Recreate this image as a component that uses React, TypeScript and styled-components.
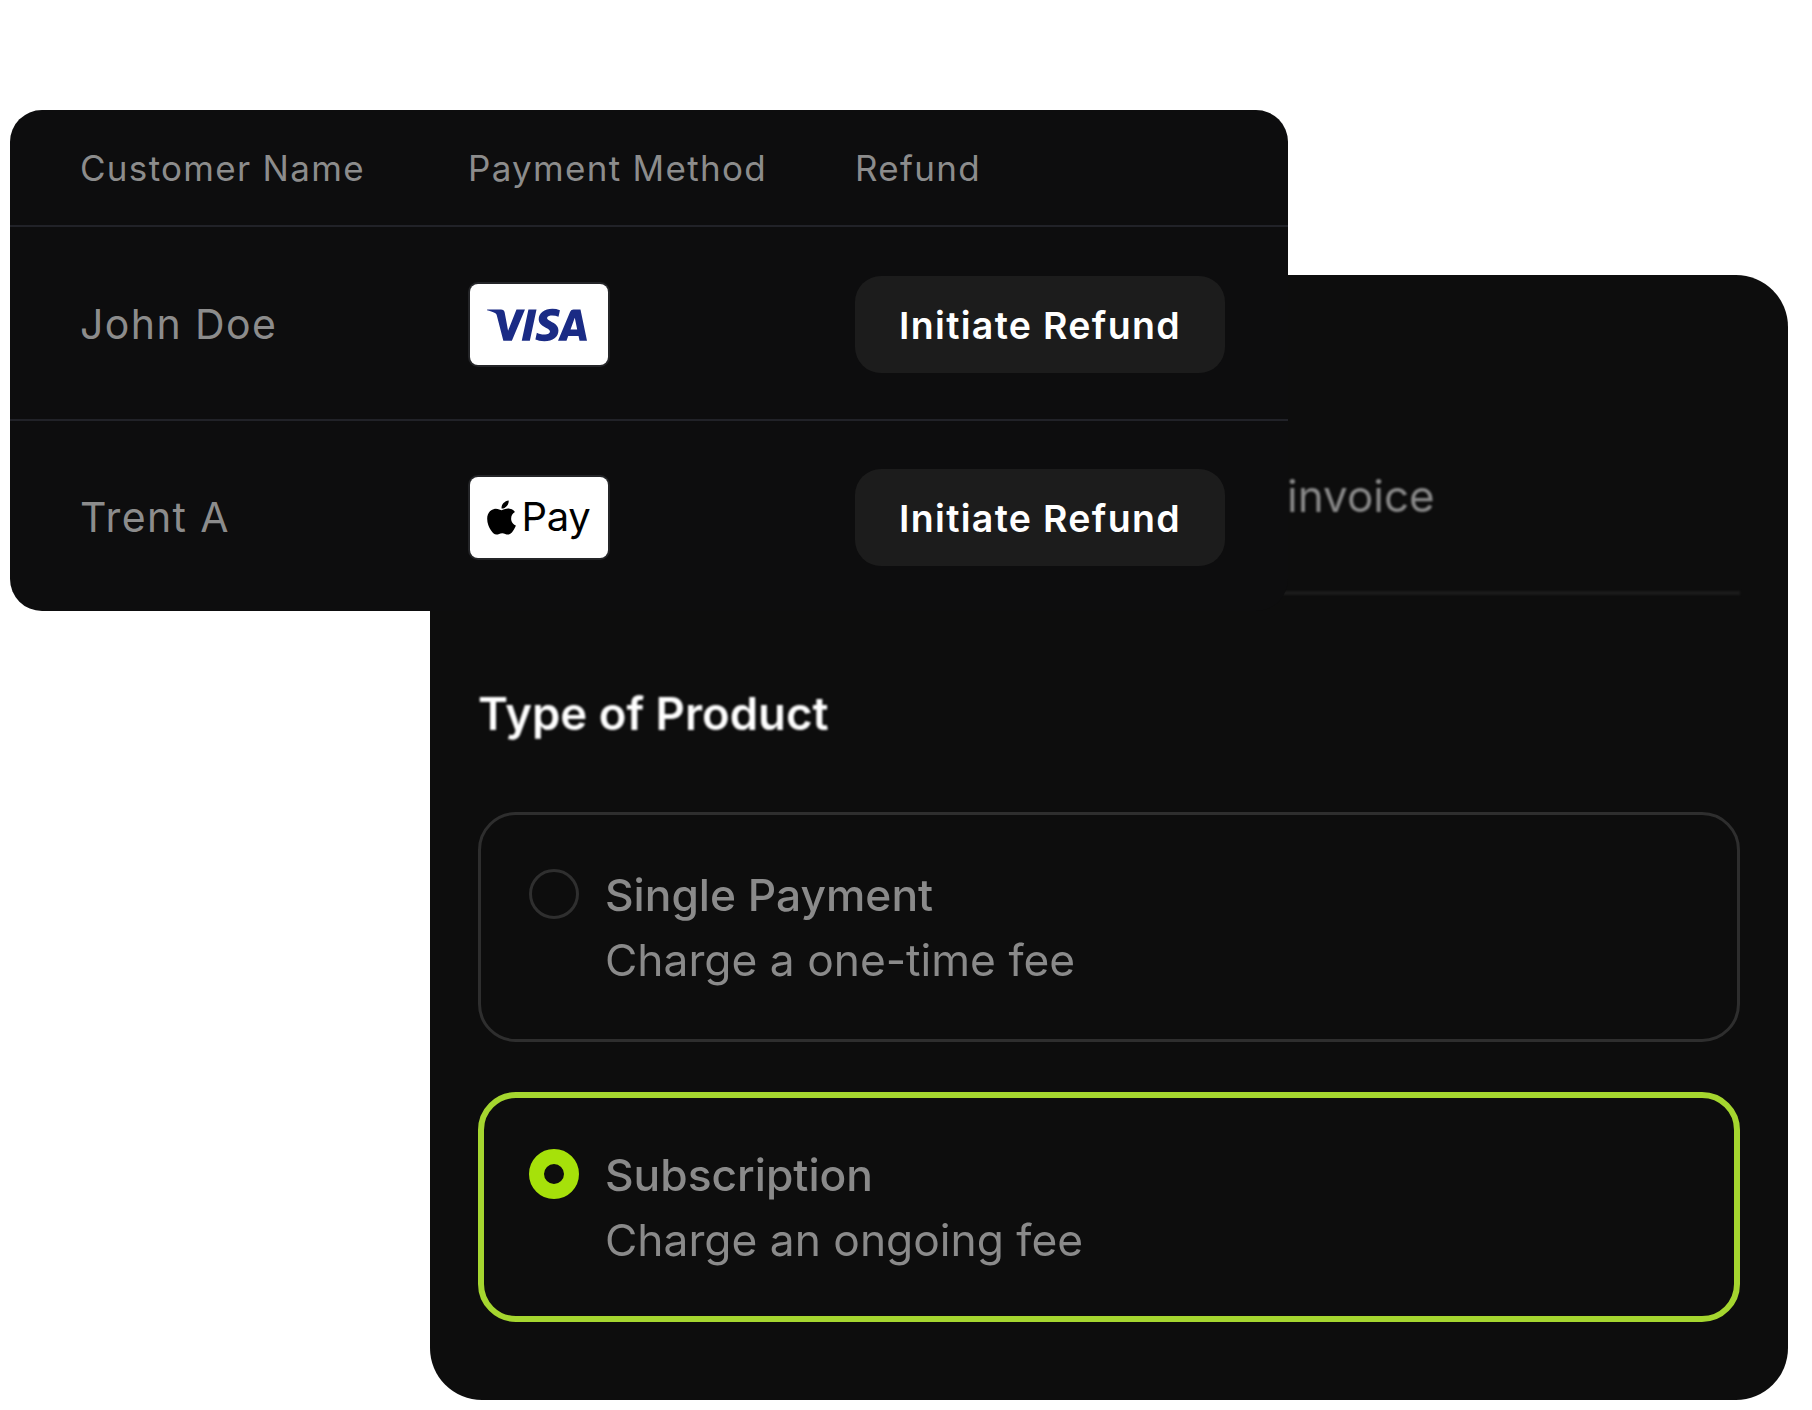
import React from "react";
import styled, { createGlobalStyle } from "styled-components";
import { SiVisa } from "react-icons/si";
import { FaApple } from "react-icons/fa";

const GlobalStyle = createGlobalStyle`
    html, body {
        margin: 0;
        background: #ffffff;
    }
    body {
        font-family: Inter, "Liberation Sans", sans-serif;
    }
`;

const Stage = styled.div`
    position: relative;
    width: 1812px;
    height: 1410px;
    overflow: hidden;
`;

const ProductPanel = styled.section`
    box-sizing: border-box;
    width: 1358px;
    height: 1125px;
    margin-left: 430px;
    position: relative;
    top: 275px;
    padding: 181px 48px 0;
    background: #0d0d0d;
    border-radius: 52px;
`;

const InvoiceRow = styled.div`
    box-sizing: border-box;
    height: 139px;
    padding-left: 809px;
    border-bottom: 4px solid #1b1b1b;
    color: #8a8a8a;
    font-size: 44px;
    line-height: 80px;
    filter: blur(0.8px);
`;

const ProductTitle = styled.h2`
    margin: 91px 0 0;
    height: 126px;
    color: #ffffff;
    font-size: 45.5px;
    font-weight: 600;
    line-height: 56px;
    filter: blur(0.8px);
`;

const OptionCard = styled.div<{ $selected?: boolean }>`
    box-sizing: border-box;
    height: 230px;
    margin-bottom: 50px;
    display: flex;
    gap: 26px;
    padding: ${p => (p.$selected ? "52px 0 0 45px" : "55px 0 0 48px")};
    border: ${p => (p.$selected ? "6px solid #a5d62f" : "3px solid #2e2e2e")};
    border-radius: 38px;
`;

const Radio = styled.span<{ $selected?: boolean }>`
    box-sizing: border-box;
    flex: none;
    width: 50px;
    height: 50px;
    margin-top: -1px;
    border-radius: 50%;
    border: ${p => (p.$selected ? "15px solid #a6e10a" : "3px solid #2f2f2f")};
    background: ${p => (p.$selected ? "#0d0d0d" : "transparent")};
    filter: blur(0.5px);
`;

const OptionText = styled.div`
    display: flex;
    flex-direction: column;
    gap: 15px;
    color: #8a8a8a;
    filter: blur(0.7px);
`;

const OptionName = styled.span`
    font-size: 44.3px;
    font-weight: 500;
    line-height: 50px;
`;

const OptionHint = styled.span`
    font-size: 44.3px;
    font-weight: 400;
    line-height: 50px;
`;

const RefundTable = styled.section`
    position: absolute;
    left: 10px;
    top: 110px;
    width: 1278px;
    height: 501px;
    background: #0d0d0e;
    border-radius: 32px;
`;

const Row = styled.div<{ $height: number; $body?: boolean; $last?: boolean }>`
    box-sizing: border-box;
    height: ${p => p.$height}px;
    display: grid;
    grid-template-columns: 388px 387px 370px;
    align-items: center;
    padding-left: 70px;
    padding-top: ${p => (p.$body ? "2px" : "0")};
    border-bottom: ${p => (p.$last ? "none" : "2px solid #212228")};
`;

const HeadCell = styled.span`
    color: #8c8c8c;
    font-size: 35px;
    letter-spacing: 1.3px;
`;

const NameCell = styled.span`
    color: #8c8c8c;
    font-size: 41px;
    letter-spacing: 1.4px;
`;

const PayBadge = styled.div`
    box-sizing: border-box;
    width: 138px;
    height: 81px;
    margin-left: 2px;
    display: flex;
    align-items: center;
    justify-content: center;
    background: #ffffff;
    border-radius: 8px;
    box-shadow: 0 0 0 2px #242528;
`;

const VisaMark = styled(SiVisa)`
    margin: 1px 4px 0 0;
`;

const ApplePay = styled.span`
    display: flex;
    align-items: center;
    gap: 0;
    margin-right: 5px;
    color: #000000;
    font-size: 40px;
    letter-spacing: -0.3px;
    line-height: 1;
`;

const RefundButton = styled.button`
    width: 370px;
    height: 97px;
    padding: 2px 0 0;
    border: none;
    border-radius: 26px;
    background: #1c1c1c;
    color: #ffffff;
    font-family: inherit;
    font-size: 37.5px;
    font-weight: 600;
    letter-spacing: 1.3px;
`;

export default function App() {
    return (
        <Stage>
            <GlobalStyle />
            <ProductPanel>
                <InvoiceRow>invoice</InvoiceRow>
                <ProductTitle>Type of Product</ProductTitle>
                <OptionCard>
                    <Radio />
                    <OptionText>
                        <OptionName>Single Payment</OptionName>
                        <OptionHint>Charge a one-time fee</OptionHint>
                    </OptionText>
                </OptionCard>
                <OptionCard $selected>
                    <Radio $selected />
                    <OptionText>
                        <OptionName>Subscription</OptionName>
                        <OptionHint>Charge an ongoing fee</OptionHint>
                    </OptionText>
                </OptionCard>
            </ProductPanel>
            <RefundTable>
                <Row $height={117}>
                    <HeadCell>Customer Name</HeadCell>
                    <HeadCell>Payment Method</HeadCell>
                    <HeadCell>Refund</HeadCell>
                </Row>
                <Row $height={194} $body>
                    <NameCell>John Doe</NameCell>
                    <PayBadge>
                        <VisaMark size={100} color="#1a2b85" />
                    </PayBadge>
                    <RefundButton>Initiate Refund</RefundButton>
                </Row>
                <Row $height={190} $body $last>
                    <NameCell>Trent A</NameCell>
                    <PayBadge>
                        <ApplePay>
                            <FaApple size={39} />
                            Pay
                        </ApplePay>
                    </PayBadge>
                    <RefundButton>Initiate Refund</RefundButton>
                </Row>
            </RefundTable>
        </Stage>
    );
}
